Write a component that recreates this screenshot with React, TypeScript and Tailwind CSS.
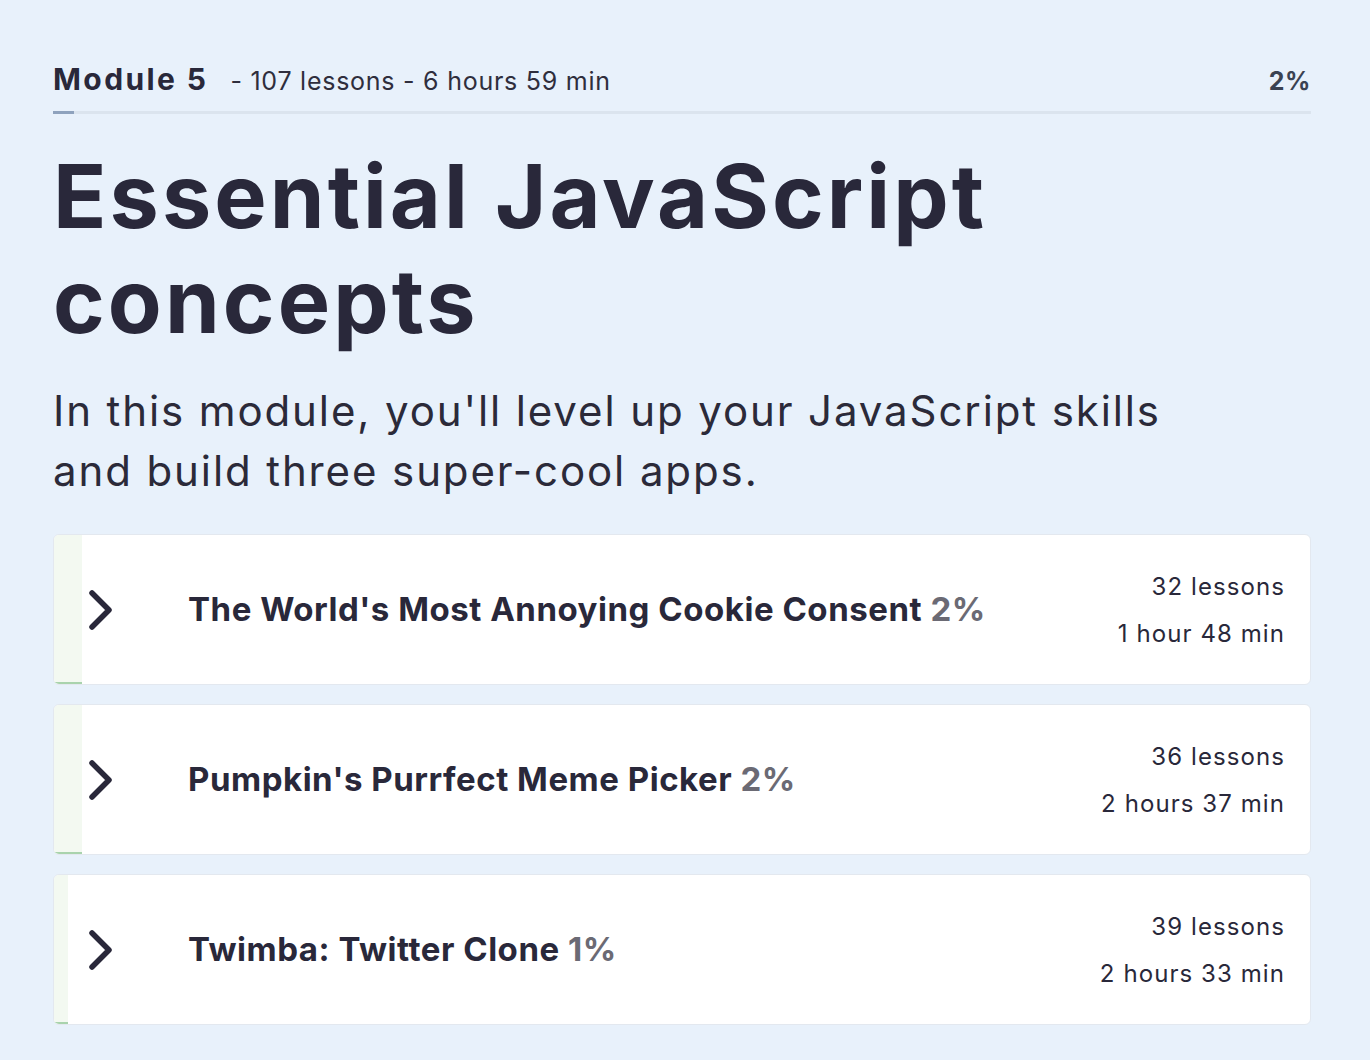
import React from 'react'

type Section = {
  title: string
  progress: number
  lessons: number
  duration: string
}

const sections: Section[] = [
  { title: "The World's Most Annoying Cookie Consent", progress: 2, lessons: 32, duration: '1 hour 48 min' },
  { title: "Pumpkin's Purrfect Meme Picker", progress: 2, lessons: 36, duration: '2 hours 37 min' },
  { title: 'Twimba: Twitter Clone', progress: 1, lessons: 39, duration: '2 hours 33 min' },
]

function Chevron() {
  return (
    <svg width="30" height="42" viewBox="0 0 30 42" fill="none">
      <path d="M6 4 L23 21 L6 38" stroke="#29283a" strokeWidth="5.5" strokeLinecap="round" strokeLinejoin="round" />
    </svg>
  )
}

function SectionCard({ section }: { section: Section }) {
  return (
    <div className="relative flex h-[151px] items-center overflow-hidden rounded-md border border-[#e3e8ef] bg-white">
      <div
        className="absolute inset-y-0 left-0 border-b-2 border-[#a9d3ad] bg-[#f3f9f1]"
        style={{ width: `${section.progress * 1.1}%` }}
      />
      <div className="relative flex w-full items-center pl-[32px] pr-[25px]">
        <Chevron />
        <div className="ml-[72px] flex-1 text-[33px] font-bold tracking-[0.016em] text-[#29283a]">
          {section.title} <span className="text-[#6b6a74]">{section.progress}%</span>
        </div>
        <div className="text-right text-[24px] leading-[47px] tracking-[0.045em] text-[#29283a]">
          <div>{section.lessons} lessons</div>
          <div>{section.duration}</div>
        </div>
      </div>
    </div>
  )
}

export default function App() {
  return (
    <div className="min-h-[1060px] bg-[#e8f1fb] pl-[53px] pr-[59px] pt-[57px] font-['Inter',sans-serif] text-[#29283a]">
      <div className="flex items-baseline">
        <span className="text-[30px] font-bold tracking-[0.08em]">Module 5</span>
        <span className="ml-[22px] text-[25px] tracking-[0.03em] text-[#2f2e3d]">- 107 lessons - 6 hours 59 min</span>
        <span className="ml-auto text-[25px] font-bold tracking-[0.02em] text-[#3a4252]">2%</span>
      </div>
      <div className="mt-[9px] h-[3px] w-full bg-[#dbe4ee]">
        <div className="h-full w-[21px] bg-[#8ea2bd]" />
      </div>
      <h1 className="mt-[30px] text-[88px] font-bold leading-[105px] tracking-[0.035em]">
        Essential JavaScript
        <br />
        concepts
      </h1>
      <p className="mt-[27px] text-[42px] leading-[60px] tracking-[0.045em] text-[#2b2a39]">
        In this module, you'll level up your JavaScript skills
        <br />
        and build three super-cool apps.
      </p>
      <div className="mt-[33px] flex flex-col gap-[19px]">
        {sections.map(s => (
          <SectionCard key={s.title} section={s} />
        ))}
      </div>
    </div>
  )
}
